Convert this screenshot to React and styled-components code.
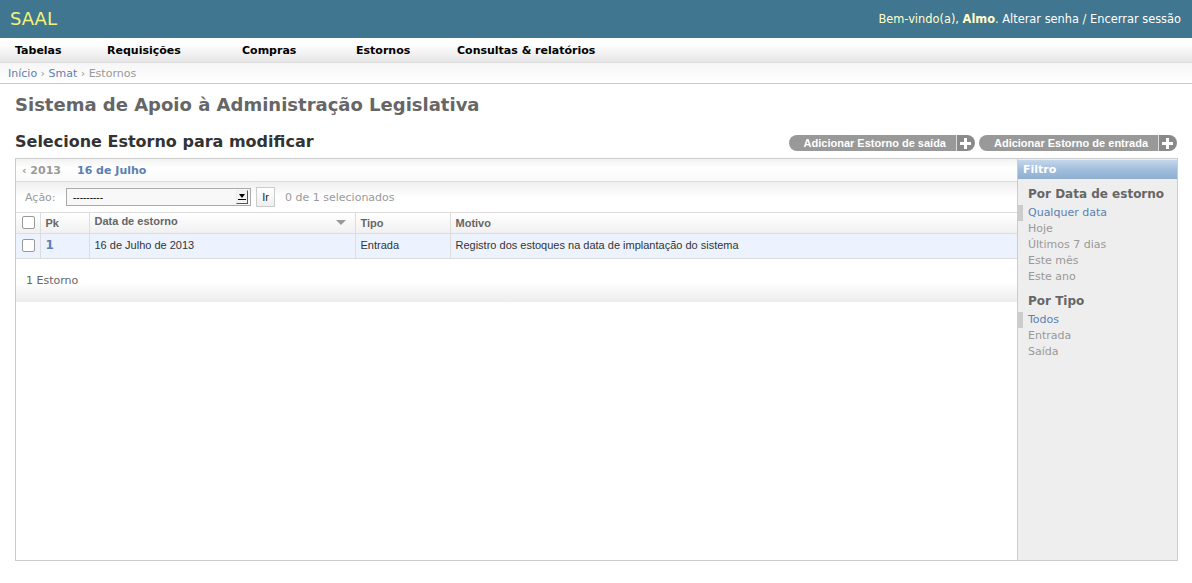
import React from 'react';
import styled, { createGlobalStyle } from 'styled-components';

const GlobalStyle = createGlobalStyle`
  body {
    margin: 0;
    background: #fff;
    font-family: "DejaVu Sans", "Liberation Sans", sans-serif;
    color: #333;
  }
  a { text-decoration: none; }
`;

const navItems = [
  { label: 'Tabelas', width: 92 },
  { label: 'Requisições', width: 135 },
  { label: 'Compras', width: 114 },
  { label: 'Estornos', width: 101 },
  { label: 'Consultas & relatórios' },
];

const dateFilters = ['Qualquer data', 'Hoje', 'Últimos 7 dias', 'Este mês', 'Este ano'];
const typeFilters = ['Todos', 'Entrada', 'Saída'];

function Check() {
  return <CheckBox />;
}

function PlusIcon() {
  return (
    <svg width="11" height="11" viewBox="0 0 11 11">
      <rect x="4" y="0" width="3" height="11" fill="#fff" />
      <rect x="0" y="4" width="11" height="3" fill="#fff" />
    </svg>
  );
}

function App() {
  return (
    <>
      <GlobalStyle />
      <Header>
        <Brand>SAAL</Brand>
        <UserTools>
          Bem-vindo(a), <strong>Almo</strong>. <UserLink>Alterar senha</UserLink> / <UserLink>Encerrar sessão</UserLink>
        </UserTools>
      </Header>
      <Nav>
        {navItems.map((item) => (
          <NavItem key={item.label} $width={item.width}>{item.label}</NavItem>
        ))}
      </Nav>
      <Breadcrumbs>
        <Crumb>Início</Crumb> › <Crumb>Smat</Crumb> › Estornos
      </Breadcrumbs>

      <Content>
        <SiteTitle>Sistema de Apoio à Administração Legislativa</SiteTitle>
        <TitleRow>
          <PageTitle>Selecione Estorno para modificar</PageTitle>
          <ObjectTools>
            <AddButton>
              <AddLabel>Adicionar Estorno de saída</AddLabel>
              <AddPlus><PlusIcon /></AddPlus>
            </AddButton>
            <AddButton>
              <AddLabel>Adicionar Estorno de entrada</AddLabel>
              <AddPlus><PlusIcon /></AddPlus>
            </AddButton>
          </ObjectTools>
        </TitleRow>

        <ChangeList>
          <Main>
            <DateBar>
              <DateBack>‹ 2013</DateBack>
              <DateCurrent>16 de Julho</DateCurrent>
            </DateBar>
            <Actions>
              <ActionLabel>Ação:</ActionLabel>
              <Select>
                <span>---------</span>
                <SelectArrow />
              </Select>
              <GoButton>Ir</GoButton>
              <Counter>0 de 1 selecionados</Counter>
            </Actions>
            <Table>
              <thead>
                <tr>
                  <Th $width={24}><Check /></Th>
                  <Th $width={49}>Pk</Th>
                  <Th $width={266}>
                    <HeadInner>
                      Data de estorno
                      <SortArrow />
                    </HeadInner>
                  </Th>
                  <Th $width={95}>Tipo</Th>
                  <Th>Motivo</Th>
                </tr>
              </thead>
              <tbody>
                <tr>
                  <Td><Check /></Td>
                  <Td><PkLink>1</PkLink></Td>
                  <Td>16 de Julho de 2013</Td>
                  <Td>Entrada</Td>
                  <Td>Registro dos estoques na data de implantação do sistema</Td>
                </tr>
              </tbody>
            </Table>
            <Paginator>1 Estorno</Paginator>
          </Main>

          <Filter>
            <FilterTitle>Filtro</FilterTitle>
            <FilterHeading>Por Data de estorno</FilterHeading>
            <FilterList>
              {dateFilters.map((f, i) => (
                <FilterItem key={f} $selected={i === 0}>{f}</FilterItem>
              ))}
            </FilterList>
            <FilterHeading>Por Tipo</FilterHeading>
            <FilterList>
              {typeFilters.map((f, i) => (
                <FilterItem key={f} $selected={i === 0}>{f}</FilterItem>
              ))}
            </FilterList>
          </Filter>
        </ChangeList>
      </Content>
    </>
  );
}

const Header = styled.header`
  height: 38px;
  background: #417690;
  display: flex;
  align-items: center;
  justify-content: space-between;
  padding: 0 11px 0 10px;
`;

const Brand = styled.div`
  color: #f4f379;
  font-size: 18px;
  margin-top: -1px;
`;

const UserTools = styled.div`
  color: #ffc;
  font-size: 11.4px;
  strong { font-weight: bold; }
`;

const UserLink = styled.a`
  color: #fff;
`;

const Nav = styled.nav`
  height: 24px;
  display: flex;
  align-items: center;
  padding-left: 15px;
  background: linear-gradient(#fff, #fdfdfd 30%, #e6e6e6);
  border-bottom: 1px solid #ddd;
`;

const NavItem = styled.div`
  width: ${(p) => (p.$width ? `${p.$width}px` : 'auto')};
  font-size: 11px;
  font-weight: bold;
  color: #000;
  margin-top: 1px;
`;

const Breadcrumbs = styled.div`
  height: 20px;
  padding: 0 8px;
  display: flex;
  align-items: center;
  font-size: 11px;
  color: #999;
  background: linear-gradient(#f6f6f6, #fff);
  border-bottom: 1px solid #ccc;
  white-space: pre;
`;

const Crumb = styled.a`
  color: #5b80b2;
`;

const Content = styled.div`
  padding: 0 14px 0 15px;
`;

const SiteTitle = styled.h1`
  margin: 10px 0 0;
  font-size: 18px;
  line-height: 22px;
  color: #666;
  font-weight: bold;
`;

const TitleRow = styled.div`
  display: flex;
  justify-content: space-between;
  align-items: flex-end;
  margin-top: 16px;
`;

const PageTitle = styled.h2`
  margin: 0;
  font-size: 16px;
  line-height: 20px;
  color: #333;
`;

const ObjectTools = styled.div`
  display: flex;
  gap: 4px;
  margin-bottom: 1px;
  margin-right: 1px;
`;

const AddButton = styled.a`
  display: flex;
  height: 16px;
  font-family: "Liberation Sans", Arial, sans-serif;
`;

const AddLabel = styled.span`
  background: #999;
  color: #fff;
  font-size: 11px;
  font-weight: bold;
  line-height: 16px;
  padding: 0 10px 0 15px;
  border-radius: 8px 0 0 8px;
`;

const AddPlus = styled.span`
  width: 17px;
  background: #8a8a8a;
  border-left: 1px solid #ddd;
  border-radius: 0 8px 8px 0;
  display: flex;
  align-items: center;
  justify-content: center;
  padding-right: 1px;
`;

const ChangeList = styled.div`
  margin-top: 6px;
  border: 1px solid #ccc;
  height: 401px;
  display: flex;
`;

const Main = styled.div`
  flex: 1;
  display: flex;
  flex-direction: column;
`;

const DateBar = styled.div`
  height: 22px;
  display: flex;
  align-items: center;
  gap: 16px;
  padding-left: 6px;
  font-size: 11px;
  font-weight: bold;
  background: linear-gradient(#f2f2f2, #fff 40%, #fafafa);
  border-bottom: 1px solid #ddd;
  & > span { margin-top: 1px; }
`;

const DateBack = styled.span`
  color: #999;
`;

const DateCurrent = styled.span`
  color: #5b80b2;
`;

const Actions = styled.div`
  height: 30px;
  display: flex;
  align-items: center;
  padding-left: 9px;
  font-size: 11px;
  color: #999;
  background: linear-gradient(#efefef, #fff 50%);
  border-bottom: 1px solid #ddd;
`;

const ActionLabel = styled.span`
  width: 41px;
`;

const Select = styled.div`
  width: 177px;
  height: 16px;
  border: 1px solid #aaa;
  background: #f8f8f8;
  display: flex;
  align-items: center;
  justify-content: space-between;
  padding-left: 6px;
  box-sizing: content-box;
  font-family: "Liberation Sans", Arial, sans-serif;
  font-size: 10px;
  color: #000;
  margin-right: 5px;
`;

const SelectArrow = styled.span`
  width: 10px;
  height: 12px;
  margin-right: 2px;
  background: #f4f4f4;
  border: 1px solid #555;
  border-left-color: #eee;
  border-top-color: #eee;
  position: relative;
  &::after {
    content: '';
    position: absolute;
    left: 2px;
    top: 3px;
    border-left: 3px solid transparent;
    border-right: 3px solid transparent;
    border-top: 4px solid #000;
  }
  &::before {
    content: '';
    position: absolute;
    left: 1px;
    top: 8px;
    width: 8px;
    height: 1px;
    background: #000;
  }
`;

const GoButton = styled.button`
  width: 19px;
  height: 20px;
  padding: 0;
  border: 1px solid #ccc;
  background: linear-gradient(#fff, #eee);
  font-family: "Liberation Sans", Arial, sans-serif;
  font-size: 11px;
  color: #222;
  margin-right: 10px;
`;

const Counter = styled.span`
  font-size: 11px;
  color: #999;
`;

const Table = styled.table`
  width: 100%;
  table-layout: fixed;
  border-collapse: collapse;
  font-family: "Liberation Sans", Arial, sans-serif;
  font-size: 11px;
`;

const Th = styled.th`
  box-sizing: border-box;
  width: ${(p) => (p.$width ? `${p.$width}px` : 'auto')};
  height: 20px;
  padding: 0 5px;
  text-align: left;
  font-size: 11px;
  color: #666;
  background: linear-gradient(#fff, #f0f0f0);
  border-left: 1px solid #ddd;
  border-bottom: 1px solid #ddd;
  vertical-align: middle;
  &:first-child {
    border-left: none;
    padding: 0 6px;
  }
`;

const HeadInner = styled.div`
  display: flex;
  justify-content: space-between;
  align-items: center;
  margin-top: -3px;
`;

const SortArrow = styled.span`
  border-left: 5px solid transparent;
  border-right: 5px solid transparent;
  border-top: 5px solid #999;
  margin-right: 4px;
  margin-top: 3px;
`;

const Td = styled.td`
  box-sizing: border-box;
  height: 25px;
  padding: 0 5px 2px;
  background: #edf3fe;
  border-left: 1px solid #ddd;
  border-bottom: 1px solid #ddd;
  color: #333;
  vertical-align: middle;
  &:first-child {
    border-left: none;
    padding: 0 6px 1px;
  }
`;

const CheckBox = styled.span`
  display: block;
  width: 11px;
  height: 11px;
  border: 1px solid #999;
  border-radius: 2px;
  background: #fff;
`;

const PkLink = styled.a`
  color: #5b80b2;
  font-family: "DejaVu Sans", sans-serif;
  font-weight: bold;
  font-size: 12px;
`;

const Paginator = styled.div`
  height: 43px;
  padding-left: 10px;
  display: flex;
  align-items: center;
  font-size: 11px;
  color: #666;
  background: linear-gradient(#fff 55%, #ececec);
`;

const Filter = styled.div`
  width: 159px;
  background: #eee;
  border-left: 1px solid #ccc;
`;

const FilterTitle = styled.div`
  height: 19px;
  display: flex;
  align-items: center;
  padding-left: 5px;
  margin-top: 1px;
  font-size: 11px;
  font-weight: bold;
  color: #fff;
  background: linear-gradient(#c5d7ea, #a1bedc 50%, #8faecf);
`;

const FilterHeading = styled.h3`
  margin: 8px 0 3px 10px;
  font-size: 12px;
  line-height: 15px;
  color: #666;
`;

const FilterList = styled.ul`
  list-style: none;
  margin: 0 0 9px;
  padding: 0;
`;

const FilterItem = styled.li`
  font-size: 11px;
  line-height: 16px;
  padding-left: ${(p) => (p.$selected ? '5px' : '10px')};
  border-left: ${(p) => (p.$selected ? '5px solid #ccc' : 'none')};
  color: ${(p) => (p.$selected ? '#5b80b2' : '#999')};
`;

export default App;
